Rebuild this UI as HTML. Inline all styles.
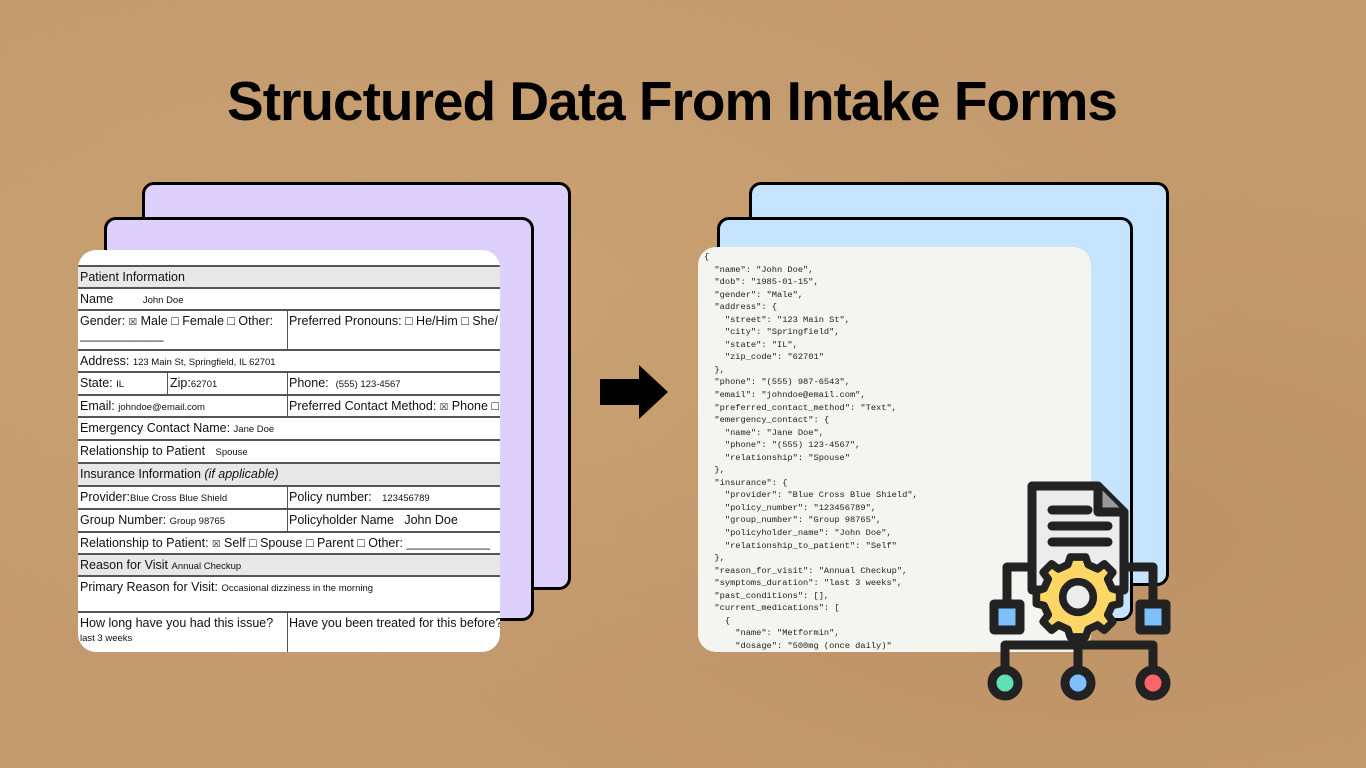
<!DOCTYPE html>
<html><head><meta charset="utf-8"><style>
*{margin:0;padding:0;box-sizing:border-box}
body{width:1366px;height:768px;overflow:hidden;position:relative;background:#c39a6d;
background-image:radial-gradient(ellipse at 30% 40%,#c9a273 0,transparent 60%),radial-gradient(ellipse at 80% 70%,#bd9366 0,transparent 50%);font-family:"Liberation Sans",sans-serif}
.title{position:absolute;left:-11px;width:1366px;top:66px;text-align:center;font-weight:bold;font-size:55px;letter-spacing:-1px;color:#000;line-height:70px}
.card{position:absolute;border:3px solid #000;border-radius:12px}
.pur{background:#ddd0fc}.blu{background:#c6e4fd}
.form{position:absolute;left:78px;top:250px;width:422px;height:402px;background:#fff;border-radius:18px;overflow:hidden}
.row{position:absolute;left:0;width:422px;border-top:2px solid #555;font-size:12.5px;color:#111;padding:3px 0 0 2px;white-space:nowrap}
.g{background:#e8e8e8}
.s{font-size:9.5px}
.v{position:absolute;top:0;bottom:0;border-left:1.5px solid #555}
.json{position:absolute;left:698px;top:247px;width:393px;height:405px;background:#f4f4f0;border-radius:18px;overflow:hidden;font-family:"Liberation Mono",monospace;font-size:8.7px;line-height:12.55px;color:#222;padding:4px 0 0 6px;white-space:pre}
</style></head><body>
<div class="title">Structured Data From Intake Forms</div>

<div class="card pur" style="left:142px;top:182px;width:429px;height:408px"></div>
<div class="card pur" style="left:104px;top:217px;width:430px;height:404px"></div>
<div class="form">
<div class="row g" style="top:15px;height:23px">Patient Information</div>
<div class="row" style="top:37px;height:23px">Name <span class="s" style="margin-left:26px">John Doe</span></div>
<div class="row" style="top:59px;height:41px">Gender: <span class="s">☒</span> Male □ Female □ Other:<br>____________<div class="v" style="left:209px"></div><span style="position:absolute;left:211px;top:3px">Preferred Pronouns: □ He/Him □ She/</span></div>
<div class="row" style="top:99px;height:23px">Address: <span class="s">123 Main St, Springfield, IL 62701</span></div>
<div class="row" style="top:121px;height:23px">State: <span class="s">IL</span><div class="v" style="left:89px"></div><span style="position:absolute;left:92px;top:3px">Zip:<span class="s">62701</span></span><div class="v" style="left:209px"></div><span style="position:absolute;left:211px;top:3px">Phone: &nbsp;<span class="s">(555) 123-4567</span></span></div>
<div class="row" style="top:144px;height:23px">Email: <span class="s">johndoe@email.com</span><div class="v" style="left:209px"></div><span style="position:absolute;left:211px;top:3px">Preferred Contact Method: <span class="s">☒</span> Phone □</span></div>
<div class="row" style="top:166px;height:23px">Emergency Contact Name: <span class="s">Jane Doe</span></div>
<div class="row" style="top:189px;height:23px">Relationship to Patient &nbsp;&nbsp;<span class="s">Spouse</span></div>
<div class="row g" style="top:212px;height:23px">Insurance Information <i>(if applicable)</i></div>
<div class="row" style="top:235px;height:23px">Provider:<span class="s">Blue Cross Blue Shield</span><div class="v" style="left:209px"></div><span style="position:absolute;left:211px;top:3px">Policy number: &nbsp;&nbsp;<span class="s">123456789</span></span></div>
<div class="row" style="top:258px;height:23px">Group Number: <span class="s">Group 98765</span><div class="v" style="left:209px"></div><span style="position:absolute;left:211px;top:3px">Policyholder Name &nbsp;&nbsp;John Doe</span></div>
<div class="row" style="top:281px;height:23px">Relationship to Patient: <span class="s">☒</span> Self □ Spouse □ Parent □ Other: ____________</div>
<div class="row g" style="top:303px;height:23px">Reason for Visit <span class="s">Annual Checkup</span></div>
<div class="row" style="top:325px;height:37px">Primary Reason for Visit: <span class="s">Occasional dizziness in the morning</span></div>
<div class="row" style="top:361px;height:45px;border-bottom:2px solid #555">How long have you had this issue?<br><span class="s">last 3 weeks</span><div class="v" style="left:209px"></div><span style="position:absolute;left:211px;top:3px">Have you been treated for this before?</span></div>
</div>

<svg style="position:absolute;left:599px;top:364px" width="70" height="56" viewBox="0 0 70 56"><path d="M1 15H40V1L69 28L40 55V41H1Z" fill="#000"/></svg>

<div class="card blu" style="left:749px;top:182px;width:420px;height:404px"></div>
<div class="card blu" style="left:717px;top:217px;width:416px;height:404px"></div>
<div class="json">{
  "name": "John Doe",
  "dob": "1985-01-15",
  "gender": "Male",
  "address": {
    "street": "123 Main St",
    "city": "Springfield",
    "state": "IL",
    "zip_code": "62701"
  },
  "phone": "(555) 987-6543",
  "email": "johndoe@email.com",
  "preferred_contact_method": "Text",
  "emergency_contact": {
    "name": "Jane Doe",
    "phone": "(555) 123-4567",
    "relationship": "Spouse"
  },
  "insurance": {
    "provider": "Blue Cross Blue Shield",
    "policy_number": "123456789",
    "group_number": "Group 98765",
    "policyholder_name": "John Doe",
    "relationship_to_patient": "Self"
  },
  "reason_for_visit": "Annual Checkup",
  "symptoms_duration": "last 3 weeks",
  "past_conditions": [],
  "current_medications": [
    {
      "name": "Metformin",
      "dosage": "500mg (once daily)"</div>

<svg style="position:absolute;left:960px;top:470px" width="220" height="240" viewBox="0 0 220 240" fill="none" stroke="#222" stroke-width="9" stroke-linejoin="round" stroke-linecap="round">
<path d="M72 16H138L164 42V120H72Z" fill="#ececec"/>
<path d="M138 16V42H164" fill="#999"/>
<path d="M92 40H128M92 56H148M92 72H148"/>
<path d="M72 97H47V132M164 97H193V132"/>
<rect x="34" y="134" width="26" height="26" fill="#7ec0fb"/>
<rect x="180" y="134" width="26" height="26" fill="#7ec0fb"/>
<path d="M118 155V175M45 200V175H193V200M118 175V200"/>
<circle cx="45" cy="213" r="13" fill="#5fe1b3"/>
<circle cx="118" cy="213" r="13" fill="#7ec0fb"/>
<circle cx="193" cy="213" r="13" fill="#fd636b"/>
<g transform="translate(118,127) scale(0.85)">
<path d="M-9 -40L9 -40L12 -31L23 -26L31 -32L41 -22L35 -14L40 -3L49 0L49 15L40 17L35 28L41 36L31 46L23 40L12 45L9 54L-9 54L-12 45L-23 40L-31 46L-41 36L-35 28L-40 17L-49 15L-49 0L-40 -3L-35 -14L-41 -22L-31 -32L-23 -26L-12 -31Z" transform="translate(0,-7)" fill="#fdd766"/>
<circle cx="0" cy="0" r="18" fill="#ececec"/>
</g>
</svg>
</body></html>
